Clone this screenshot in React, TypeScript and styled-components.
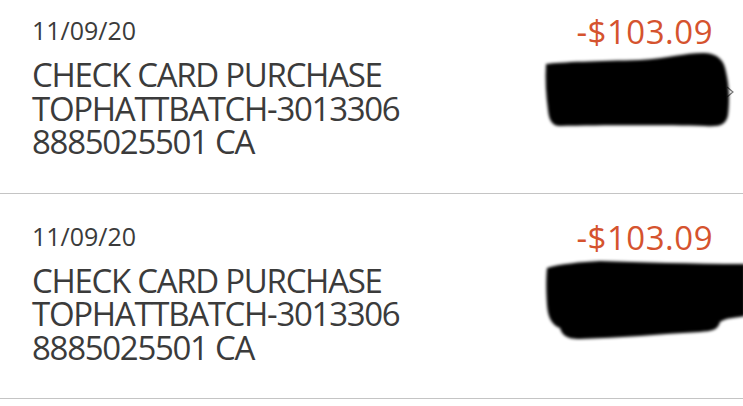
import React from 'react';
import styled, { createGlobalStyle } from 'styled-components';

type Txn = {
  date: string;
  lines: string[];
  amount: string;
};

const GlobalStyle = createGlobalStyle`
  html, body { margin: 0; padding: 0; background: #ffffff; }
  body { overflow: hidden; font-family: 'Open Sans', 'Noto Sans', sans-serif; }
`;

const Page = styled.div`
  position: relative;
  width: 743px;
  height: 406px;
  overflow: hidden;
`;

const List = styled.div`
  margin-top: -12px;
`;

const Row = styled.div`
  position: relative;
  display: flex;
  justify-content: space-between;
  height: 205.5px;
  box-sizing: border-box;
  padding: 27px 30px 0 32px;
  border-bottom: 1px solid #c4c4c4;
`;

const Left = styled.div`
  display: flex;
  flex-direction: column;
  color: #3b3b3b;
`;

const DateText = styled.div`
  font-size: 25px;
  line-height: 30px;
  margin-bottom: 13px;
`;

const Desc = styled.div`
  font-size: 33px;
  line-height: 33.5px;
  letter-spacing: -1.3px;
`;

const Right = styled.div`
  display: flex;
  flex-direction: column;
  align-items: flex-end;
`;

const Amount = styled.div`
  font-size: 33px;
  line-height: 34px;
  color: #d5532e;
  letter-spacing: 0.5px;
`;

const Chevron = styled.svg`
  position: absolute;
  right: 9px;
  top: 98px;
`;

const Redactions = styled.svg`
  position: absolute;
  left: 0;
  top: 0;
  pointer-events: none;
`;

const txns: Txn[] = [
  {
    date: '11/09/20',
    lines: ['CHECK CARD PURCHASE', 'TOPHATTBATCH-3013306', '8885025501 CA'],
    amount: '-$103.09',
  },
  {
    date: '11/09/20',
    lines: ['CHECK CARD PURCHASE', 'TOPHATTBATCH-3013306', '8885025501 CA'],
    amount: '-$103.09',
  },
];

export default function App() {
  return (
    <Page>
      <GlobalStyle />
      <List>
        {txns.map((t, i) => (
          <Row key={i}>
            <Left>
              <DateText>{t.date}</DateText>
              <Desc>
                {t.lines.map((l, j) => (
                  <React.Fragment key={j}>
                    {l}
                    {j < t.lines.length - 1 && <br />}
                  </React.Fragment>
                ))}
              </Desc>
            </Left>
            <Right>
              <Amount>{t.amount}</Amount>
            </Right>
            <Chevron width="8" height="12" viewBox="0 0 8 12">
              <path d="M1 1 L7 6 L1 11" fill="none" stroke="#777" strokeWidth="1.2" />
            </Chevron>
          </Row>
        ))}
      </List>
      {/* marker scribbles hiding the account info */}
      <Redactions width="743" height="406" viewBox="0 0 743 406">
        <defs>
          <filter id="soft" x="-10%" y="-20%" width="120%" height="140%">
            <feGaussianBlur stdDeviation="1.5" />
          </filter>
        </defs>
        <path
          d="M546 64 C560 62 600 61 640 60 C670 58 690 52 705 53 C718 54 724 60 726 72 C729 85 730 100 728 115 C726 125 720 127 705 126 C670 125 600 125 560 126 C552 126 549 120 548 110 C546 95 545 80 546 64 Z"
          fill="#000"
          filter="url(#soft)"
        />
        <path
          d="M547 268 C560 264 580 262 600 261 C640 262 690 264 745 264 L745 316 C735 318 725 318 720 322 C718 330 712 331 700 332 C660 334 620 338 580 339 C565 339 562 334 560 328 C552 325 548 318 547 305 C546 290 546 278 547 268 Z"
          fill="#000"
          filter="url(#soft)"
        />
      </Redactions>
    </Page>
  );
}
